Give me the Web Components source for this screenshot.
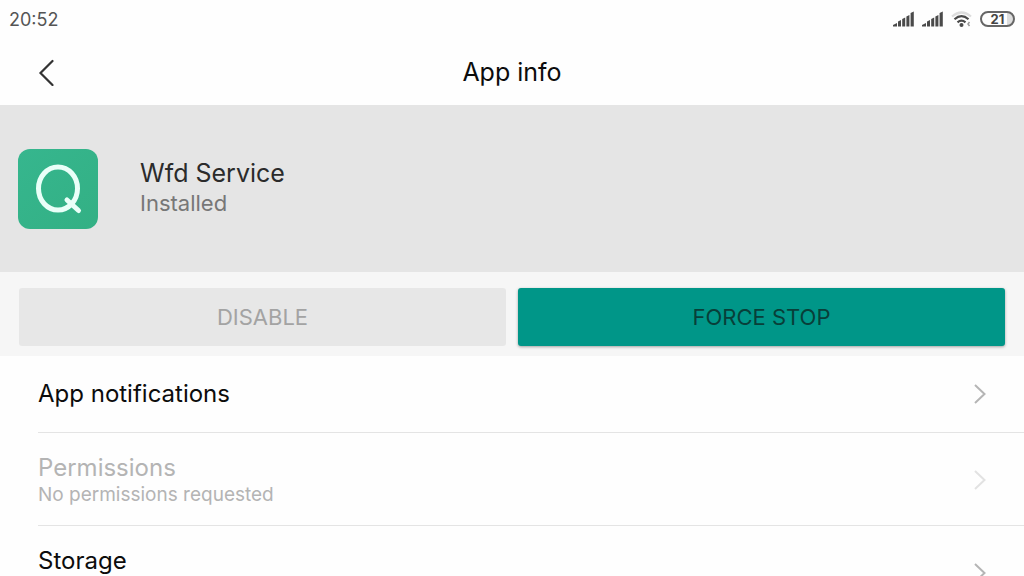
<!DOCTYPE html>
<html lang="en">
<head>
<meta charset="utf-8">
<meta name="viewport" content="width=device-width, initial-scale=1">
<title>App info</title>
<style>
  html, body {
    margin: 0;
    height: 100%;
  }

  body {
    background: #fefefe;
    color: #0c0c0c;
    font-family: Inter, 'Noto Sans', sans-serif;
  }
</style>
</head>
<body>
<app-info-screen>
  <status-bar slot="status" battery="21">20:52</status-bar>
  <page-header slot="header">App info</page-header>
  <app-summary>
    <span slot="name">Wfd Service</span>
    <span slot="state">Installed</span>
  </app-summary>
  <action-bar>
    <action-button disabled>DISABLE</action-button>
    <action-button primary>FORCE STOP</action-button>
  </action-bar>
  <setting-row>App notifications</setting-row>
  <setting-row two-line disabled>Permissions<span slot="summary">No permissions requested</span></setting-row>
  <setting-row two-line>Storage</setting-row>
</app-info-screen>

<script>
class BaseElement extends HTMLElement {
  constructor() {
    super();
    const template = document.createElement('template');
    template.innerHTML = this.constructor.markup;
    this.attachShadow({ mode: 'open' });
    this.shadowRoot.appendChild(template.content.cloneNode(true));
  }
}

class AppInfoScreen extends BaseElement {
  static markup = `
    <style>
      :host { display: flex; flex-direction: column; height: 100%; }
      main {
        flex: 1;
        min-height: 0;
        overflow-y: auto;
        scrollbar-width: none;
      }
    </style>
    <slot name="status"></slot>
    <slot name="header"></slot>
    <main><slot></slot></main>
  `;
}

class StatusBar extends BaseElement {
  static markup = `
    <style>
      :host {
        display: flex;
        flex: none;
        align-items: center;
        justify-content: space-between;
        height: 38px;
        padding: 0 9px;
        color: #555;
        font-size: 18px;
      }
      .icons { display: flex; align-items: center; gap: 8px; }
      svg { display: block; }
      .battery {
        box-sizing: border-box;
        width: 35px;
        height: 16px;
        border: 2px solid #666;
        border-radius: 8px;
        background: linear-gradient(to right, transparent 80%, #ddd 80%);
        color: #444;
        font-size: 13px;
        font-weight: 700;
        line-height: 12px;
        text-align: center;
      }
    </style>
    <time><slot></slot></time>
    <div class="icons">
      <svg width="21" height="16" viewBox="0 0 21 16" fill="#4a4a4a" aria-hidden="true">
        <path d="M0 15.500v-1.500l4-2v3.500zM5 15.500v-5l3-1.500v6.500zM9.200 15.500V8l3-1.500v9zM13.400 15.500V5.500l3-1.500v11.500zM17.600 15.500V2l3.200-1.500v15z"/>
      </svg>
      <svg width="21" height="16" viewBox="0 0 21 16" fill="#4a4a4a" aria-hidden="true">
        <path d="M0 15.500v-1.500l4-2v3.500zM5 15.500v-5l3-1.500v6.500zM9.200 15.500V8l3-1.500v9zM13.400 15.500V5.500l3-1.500v11.500zM17.600 15.500V2l3.200-1.500v15z"/>
      </svg>
      <svg width="21" height="16" viewBox="0 0 21 16" fill="none" stroke="#4a4a4a" stroke-width="2.200" aria-hidden="true">
        <path d="M1 5.500Q10.500 -2.500 20 5.500" stroke="#ddd"/>
        <path d="M3.500 8.200Q10.500 2 17.500 8.200M6.500 11.400Q10.500 8 14.500 11.400"/>
        <circle cx="10.500" cy="14" r="2" fill="#4a4a4a" stroke="none"/>
        <path d="M18.500 11l-1.500 2 1.500 2" stroke="#999" stroke-width="1.500"/>
      </svg>
      <div class="battery"></div>
    </div>
  `;

  connectedCallback() {
    this.shadowRoot.querySelector('.battery').textContent = this.getAttribute('battery');
  }
}

class PageHeader extends BaseElement {
  static markup = `
    <style>
      :host {
        display: grid;
        flex: none;
        grid-template-columns: 48px 1fr 48px;
        align-items: center;
        height: 67px;
        padding: 0 22px;
      }
      button {
        display: grid;
        place-items: center;
        width: 48px;
        height: 48px;
        padding: 0;
        border: 0;
        background: none;
        color: #333;
      }
      h1 {
        margin: 0;
        font-size: 25px;
        font-weight: 400;
        line-height: 30px;
        text-align: center;
      }
    </style>
    <button type="button" aria-label="Back">
      <svg width="16" height="28" viewBox="0 0 16 28" fill="none" stroke="currentColor" stroke-width="2.200" stroke-linecap="round">
        <path d="M14.500 3L2.500 15l12 12"/>
      </svg>
    </button>
    <h1><slot></slot></h1>
  `;
}

class AppSummary extends BaseElement {
  static markup = `
    <style>
      :host {
        display: flex;
        align-items: center;
        gap: 42px;
        padding: 44px 18px 43px;
        background: #e5e5e5;
      }
      svg { display: block; flex: none; }
      .text { display: flex; flex-direction: column; padding-bottom: 2px; }
      .name { color: #2b2b2b; font-size: 25px; line-height: 30px; }
      .state { color: #777; font-size: 22px; line-height: 30px; }
    </style>
    <svg width="80" height="80" viewBox="0 0 80 80" fill="none" aria-hidden="true">
      <defs>
        <linearGradient id="tile" x1="0" y1="0" x2="1" y2="1">
          <stop offset="0" stop-color="#36b68e"/>
          <stop offset="1" stop-color="#33b084"/>
        </linearGradient>
      </defs>
      <rect width="80" height="80" rx="12" fill="url(#tile)"/>
      <g stroke="#e9fff8" stroke-width="5" stroke-linecap="round">
        <ellipse cx="40" cy="39.500" rx="19.500" ry="21.500"/>
        <path d="M49 51l11.500 10.500"/>
      </g>
    </svg>
    <div class="text">
      <div class="name"><slot name="name"></slot></div>
      <div class="state"><slot name="state"></slot></div>
    </div>
  `;
}

class ActionBar extends BaseElement {
  static markup = `
    <style>
      :host {
        display: grid;
        grid-template-columns: 1fr 1fr;
        gap: 12px;
        padding: 16px 19px 10px;
        background: #f6f6f6;
      }
    </style>
    <slot></slot>
  `;
}

class ActionButton extends BaseElement {
  static markup = `
    <style>
      :host { display: block; }
      button {
        display: block;
        width: 100%;
        height: 58px;
        padding: 0;
        border: 0;
        border-radius: 3px;
        background: #e7e7e7;
        color: #a3a3a3;
        font: inherit;
        font-size: 22px;
      }
      :host([primary]) button {
        background: #009688;
        color: #083f39;
        box-shadow: 0 1px 3px rgba(0, 0, 0, 0.35);
      }
    </style>
    <button type="button"><slot></slot></button>
  `;

  connectedCallback() {
    this.shadowRoot.querySelector('button').disabled = this.hasAttribute('disabled');
  }
}

class SettingRow extends BaseElement {
  static markup = `
    <style>
      :host { display: block; padding-left: 38px; }
      button {
        display: flex;
        align-items: center;
        justify-content: space-between;
        width: 100%;
        padding: 23px 38px 23px 0;
        border: 0;
        border-bottom: 1px solid #e4e4e4;
        background: none;
        color: #0c0c0c;
        font: inherit;
        text-align: left;
      }
      .text { display: flex; flex-direction: column; }
      .title { font-size: 24px; line-height: 30px; }
      .summary { display: none; height: 24px; font-size: 19px; line-height: 24px; }
      svg { display: block; color: #b5b5b5; }

      :host([two-line]) button { padding-top: 20px; padding-bottom: 18px; }
      :host([two-line]) .summary { display: block; }
      :host([disabled]) button { color: #b4b4b4; }
      :host([disabled]) svg { color: #e2e2e2; }
    </style>
    <button type="button">
      <span class="text">
        <span class="title"><slot></slot></span>
        <span class="summary"><slot name="summary"></slot></span>
      </span>
      <svg width="12" height="20" viewBox="0 0 12 20" fill="none" stroke="currentColor" stroke-width="2" aria-hidden="true">
        <path d="M1 1l9.500 9L1 19"/>
      </svg>
    </button>
  `;

  connectedCallback() {
    this.shadowRoot.querySelector('button').disabled = this.hasAttribute('disabled');
  }
}

customElements.define('app-info-screen', AppInfoScreen);
customElements.define('status-bar', StatusBar);
customElements.define('page-header', PageHeader);
customElements.define('app-summary', AppSummary);
customElements.define('action-bar', ActionBar);
customElements.define('action-button', ActionButton);
customElements.define('setting-row', SettingRow);
</script>
</body>
</html>
